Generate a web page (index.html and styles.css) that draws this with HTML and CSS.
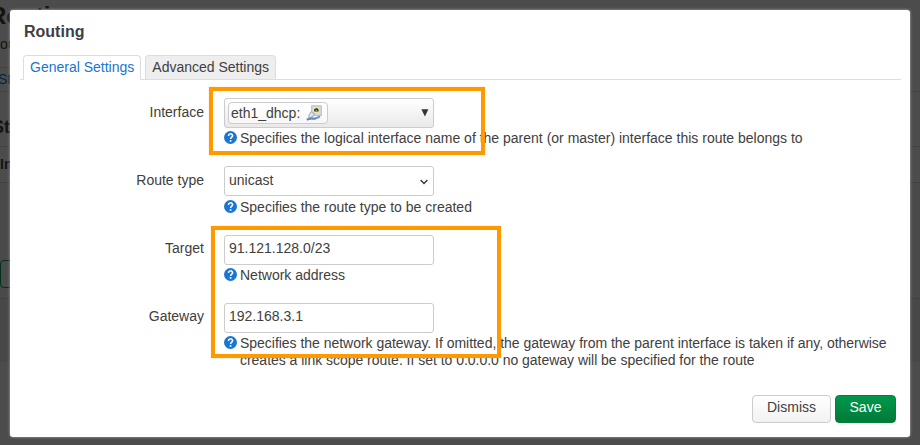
FILE: index.html
```
<!DOCTYPE html>
<html lang="en">
<head>
<meta charset="utf-8">
<title>Routing</title>
<link rel="stylesheet" href="styles.css">
</head>
<body>
<svg class="defs" width="0" height="0" aria-hidden="true">
  <symbol id="help" viewBox="0 0 13 13">
    <circle cx="6.5" cy="6.5" r="6.5" fill="#1976d2"/>
    <path d="M4.5 5C4.5 2.2 8.6 2.2 8.6 4.8C8.6 6.1 6.6 6.2 6.6 8" fill="none" stroke="#fff" stroke-width="1.5"/>
    <circle cx="6.6" cy="9.9" r="0.95" fill="#fff"/>
  </symbol>
</svg>
<div class="page">
  <h2 class="page-title">Routing</h2>
  <p class="page-desc">Routing</p>
  <div class="page-tabs"><div class="page-tab">Static</div></div>
  <h3 class="page-section">Static</h3>
  <div class="page-head">Interface</div>
  <div class="page-body"><div class="page-add"></div></div>
  <div class="page-foot"></div>
</div>
<main class="modal">
  <h4 class="title">Routing</h4>
  <nav class="tabs">
    <a class="tab active">General Settings</a>
    <a class="tab">Advanced Settings</a>
  </nav>
  <div class="form">
    <div class="row">
      <label class="label">Interface</label>
      <div class="field">
        <div class="control dropdown">
          <span class="badge"><span>eth1_dhcp:</span>
            <svg width="16" height="16" viewBox="0 0 16 16">
              <rect x="5.7" y="0.8" width="9.6" height="9.8" fill="#d9d9d3" stroke="#b5b5ad" stroke-width=".8"/>
              <rect x="7.5" y="2.6" width="5.6" height="5" fill="#eceac8"/>
              <path d="M8.2 6.5V4H9.2V3.2H11.7V4H12.5V6.5Z" fill="#242b30"/>
              <rect x="9.6" y="4.7" width="1.6" height="1.2" fill="#c8b642"/>
              <path d="M2.8 10.5L5.1 6.7L8.2 8.6L6.6 12L3.2 12.8Z" fill="#e2e4e5" stroke="#8d979d" stroke-width=".8"/>
              <path d="M.8 14.8Q4 12.2 6.5 13.2T14 11.5" fill="none" stroke="#6d99cf" stroke-width="2"/>
              <path d="M1 15Q5 13.8 10 14" fill="none" stroke="#456fae" stroke-width=".8"/>
            </svg>
          </span>
          <svg class="arrow" width="8" height="8" viewBox="0 0 8 8"><path d="M.4.3H7.4L3.9 7.6Z" fill="#333"/></svg>
        </div>
        <div class="hint"><svg class="help"><use href="#help"/></svg><span>Specifies the logical interface name of the parent (or master) interface this route belongs to</span></div>
      </div>
    </div>
    <div class="row row-select">
      <label class="label">Route type</label>
      <div class="field">
        <div class="control"><span>unicast</span><svg class="chevron" width="8" height="6" viewBox="0 0 8 6"><path d="M.6 1L4 4.5L7.4 1" fill="none" stroke="#333" stroke-width="1.3"/></svg></div>
        <div class="hint"><svg class="help"><use href="#help"/></svg><span>Specifies the route type to be created</span></div>
      </div>
    </div>
    <div class="row row-input">
      <label class="label">Target</label>
      <div class="field">
        <div class="control">91.121.128.0/23</div>
        <div class="hint"><svg class="help"><use href="#help"/></svg><span>Network address</span></div>
      </div>
    </div>
    <div class="row row-input">
      <label class="label">Gateway</label>
      <div class="field">
        <div class="control">192.168.3.1</div>
        <div class="hint hint-long"><svg class="help"><use href="#help"/></svg><span>Specifies the network gateway. If omitted, the gateway from the parent interface is taken if any, otherwise<br>creates a link scope route. If set to 0.0.0.0 no gateway will be specified for the route</span></div>
      </div>
    </div>
  </div>
  <div class="actions">
    <button class="btn">Dismiss</button>
    <button class="btn save">Save</button>
  </div>
</main>
<div class="mark mark-interface"></div>
<div class="mark mark-gateway"></div>
</body>
</html>
```
FILE: styles.css
```
* { box-sizing: border-box; }
body {
  margin: 0;
  height: 445px;
  padding: 10px;
  overflow: hidden;
  background: #4c4c4c;
  color: #404040;
  font: 14px/17px "Liberation Sans", Arial, sans-serif;
}
h2, h3, h4, p { margin: 0; }
.defs { position: absolute; }

/* dimmed page behind the dialog */
.page {
  position: absolute;
  inset: 0;
  overflow: hidden;
  color: #131313;
  white-space: nowrap;
}
.page-title { height: 36px; font-size: 24px; line-height: 32px; margin-left: -11px; }
.page-desc { height: 31px; margin-left: -10px; line-height: 17px; }
.page-tabs { height: 25px; border-bottom: 1px solid #404040; }
.page-tab { width: 60px; height: 24px; line-height: 22px; border-top: 1px solid #424242; color: #08233f; margin-left: -2px; }
.page-section { height: 54px; padding-top: 23px; font-size: 18px; line-height: 24px; margin-left: -8px; }
.page-head { height: 37px; border: solid #404040; border-width: 1px 0; font-weight: bold; line-height: 35px; }
.page-body { height: 116px; padding-top: 77px; border-bottom: 1px solid #404040; background: #4a4a4a; }
.page-add { width: 40px; height: 28px; border: 1px solid #00301a; border-radius: 4px; }
.page-foot { height: 63px; background: #484848; }

.modal {
  position: relative;
  display: flex;
  flex-direction: column;
  width: 900px;
  height: 427px;
  padding: 12px 9px 14px 10px;
  background: #fff;
  border-radius: 3px;
  box-shadow: 0 0 3px #b0b0b0;
}
.title { padding-left: 4px; font-size: 16px; line-height: 20px; }
.tabs {
  display: flex;
  align-items: flex-end;
  gap: 4px;
  height: 38px;
  padding-left: 3px;
  border-bottom: 1px solid #ddd;
}
.tab {
  height: 24px;
  padding: 0 6px;
  border: 1px solid #ddd;
  border-bottom: 0;
  border-radius: 4px 4px 0 0;
  background: #eee;
  line-height: 23px;
}
.tab.active { height: 25px; margin-bottom: -1px; background: #fff; color: #1976d2; }
.form { padding-top: 18px; }
.row { display: flex; gap: 20px; min-height: 68px; }
.row-select { min-height: 69px; }
.row-select .hint { padding-top: 3px; }
.label { flex: none; width: 184px; line-height: 29px; text-align: right; }
.field { flex: 1; min-width: 0; }
.control {
  display: flex;
  justify-content: space-between;
  width: 210px;
  height: 30px;
  padding: 0 4px;
  border: 1px solid #ccc;
  border-radius: 3px;
  line-height: 27px;
}
.row-input .label { line-height: 27px; }
.row-input .control { line-height: 25px; }
.dropdown { padding: 3px 4px 3px 3px; background: linear-gradient(#fff, #e9e9e9); }
.badge {
  display: flex;
  align-items: center;
  gap: 6px;
  width: 100px;
  height: 22px;
  padding: 0 2px;
  border: 1px solid #ccc;
  border-radius: 4px;
  background: linear-gradient(#fff, #f7f7f7);
  line-height: 19px;
}
.arrow { margin-top: 7px; }
.chevron { margin: 12px 1px 0 0; }
.hint { display: flex; gap: 3px; padding-top: 2px; white-space: nowrap; }
.hint-long { letter-spacing: -0.025px; }
.help { flex: none; width: 13px; height: 13px; margin-top: 1px; }
.actions { display: flex; justify-content: flex-end; gap: 4px; margin-top: auto; padding-right: 5px; }
.btn {
  width: 79px;
  height: 28px;
  padding: 0 0 4px;
  border: 1px solid #ccc;
  border-radius: 4px;
  background: linear-gradient(#fff, #f2f2f2);
  color: #404040;
  font: inherit;
}
.save { width: 61px; border-color: #00813d; background: linear-gradient(#00984a, #007a37); color: #fff; }

/* highlight frames over the form */
.mark { position: absolute; border: 4px solid #ff9900; box-shadow: 0 0 1px #ff990080; }
.mark-interface { left: 209px; top: 87px; width: 276px; height: 68px; }
.mark-gateway { left: 211px; top: 226px; width: 290px; height: 132px; }
```
